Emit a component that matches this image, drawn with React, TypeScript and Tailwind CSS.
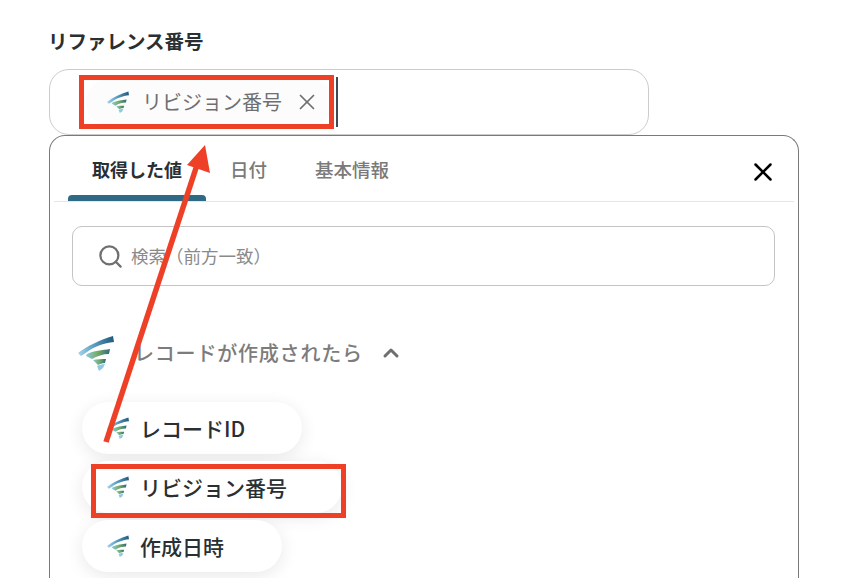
import { ChevronUp, Search, X } from 'lucide-react';

const Logo = ({ className }: { className: string }) => (
  <svg viewBox="0 0 36 36" className={className}>
    <defs>
      <linearGradient id="stripeBlue" x1="0" x2="1" y1="0" y2="0">
        <stop offset="0" stopColor="#a5d6ee" />
        <stop offset="0.45" stopColor="#5a9cc2" />
        <stop offset="1" stopColor="#1f5a7c" />
      </linearGradient>
      <linearGradient id="stripeGreen" x1="0" x2="1" y1="0" y2="0">
        <stop offset="0" stopColor="#8cc8e0" />
        <stop offset="0.5" stopColor="#72ab62" />
        <stop offset="1" stopColor="#2f6a80" />
      </linearGradient>
    </defs>
    <path d="M0 18 C9 11 22 5 35 1 L36 7 C26 8 15 12 9 17 L3 21 Z" fill="url(#stripeBlue)" />
    <path d="M9 19 C15 16 25 15 32 14 L31 19 C25 19 19 21 14 24 L8 21 Z" fill="url(#stripeGreen)" />
    <path d="M15 25 C19 24 24 24 28 24 L27 28 C24 28 22 29 20 30 Z" fill="url(#stripeGreen)" />
    <path d="M19 31 C21 30 24 29 27 29 L25 33 L21 36 Z" fill="#8fc9e6" />
  </svg>
);

const items = [
  { label: 'レコードID', width: 'w-[220px]' },
  { label: 'リビジョン番号', width: 'w-[260px]' },
  { label: '作成日時', width: 'w-[200px]' },
];

const tabs = [
  { label: '日付', width: 'w-[85px]' },
  { label: '基本情報', width: 'w-[122px]' },
];

export default function App() {
  return (
    <div className="relative h-[578px] w-[846px] overflow-hidden bg-white pl-[49px] pt-[27px] font-['Noto_Sans_CJK_JP',sans-serif]">
      <div className="-ml-[1px] text-[19.5px] font-bold leading-[28px] text-[#2a2f33]">リファレンス番号</div>

      <div className="mt-[14px] flex h-[66px] w-[600px] items-center rounded-[20px] border border-[#cccccc] pl-[36px]">
        <div className="flex h-[46px] w-[248px] items-center rounded-full bg-[#fcfcfc] pl-[21px]">
          <Logo className="h-[22px] w-[22px]" />
          <span className="ml-[13px] text-[20px] leading-[28px] text-[#6f6f6f]">リビジョン番号</span>
          <X className="ml-[12px] h-[26px] w-[26px] text-[#6f6f6f]" strokeWidth={1.6} />
        </div>
        <div className="ml-[2px] h-[50px] w-[2px] bg-[#3e4a57]" />
      </div>

      <div className="w-[750px] rounded-t-[16px] border border-b-0 border-[#7a7a7a] bg-white pb-[40px]">
        <div className="mx-[4px] flex h-[66px] border-b border-[#e6e6e6] pl-[14px]">
          <div className="relative flex w-[138px] items-center justify-center pt-[2px] text-[18px] font-bold text-[#2a2f33]">
            取得した値
            <div className="absolute bottom-0 left-0 h-[6px] w-full rounded-t-[4px] bg-[#2e6a85]" />
          </div>
          {tabs.map(tab => (
            <div key={tab.label} className={`flex items-center justify-center pt-[2px] text-[18.5px] font-medium text-[#7a7a7a] ${tab.width}`}>
              {tab.label}
            </div>
          ))}
          <X className="ml-auto mr-[16px] mt-[21px] h-[30px] w-[30px] text-black" strokeWidth={2} />
        </div>

        <div className="ml-[22px] mt-[24px] flex h-[60px] w-[703px] items-center rounded-[10px] border border-[#c4c4c4] pl-[24px]">
          <Search className="h-[27px] w-[27px] text-[#6f6f6f]" strokeWidth={2} />
          <span className="ml-[7px] text-[17.5px] text-[#8a8a8a]">検索（前方一致）</span>
        </div>

        <div className="ml-[28px] mt-[47px] flex h-[40px] items-center">
          <Logo className="h-[36px] w-[36px]" />
          <span className="ml-[20px] text-[20px] font-medium tracking-[0.8px] text-[#7c7c7c]">レコードが作成されたら</span>
          <ChevronUp className="ml-[16px] h-[24px] w-[24px] text-[#6f6f6f]" strokeWidth={3} />
        </div>

        <div className="ml-[32px] mt-[29px] flex flex-col gap-[7px]">
          {items.map(item => (
            <div key={item.label} className={`flex h-[52px] items-center rounded-full bg-white pl-[25px] shadow-[0_4px_18px_rgba(0,0,0,0.09)] ${item.width}`}>
              <Logo className="h-[22px] w-[22px]" />
              <span className="ml-[11px] pt-[1px] text-[21px] font-medium text-[#2a2f33]">{item.label}</span>
            </div>
          ))}
        </div>
      </div>

      {/* annotations on top of the screenshot */}
      <div className="absolute left-[79px] top-[75px] h-[54px] w-[255px] border-[5px] border-[#ee4026]" />
      <div className="absolute left-[91px] top-[464px] h-[54px] w-[255px] border-[5px] border-[#ee4026]" />
      <svg className="absolute left-0 top-0 h-[578px] w-[846px]" viewBox="0 0 846 578">
        <line x1="106" y1="442" x2="197" y2="165" stroke="#ee4026" strokeWidth="5.5" />
        <polygon points="205,145 187,165 210,173" fill="#ee4026" />
      </svg>
    </div>
  );
}
